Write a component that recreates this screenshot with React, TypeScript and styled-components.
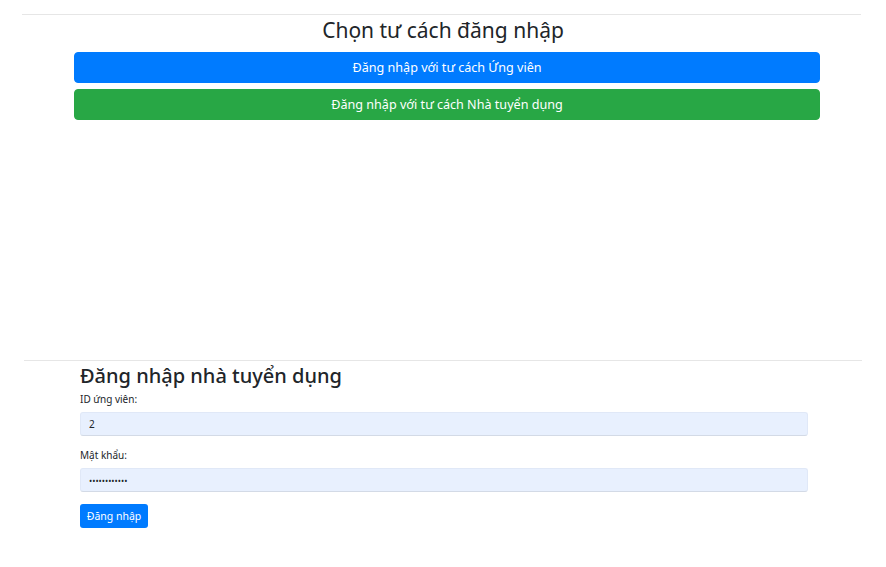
import React from 'react';
import styled, { createGlobalStyle } from 'styled-components';

const GlobalStyle = createGlobalStyle`
  body {
    margin: 0;
    background: #ffffff;
    font-family: "Noto Sans", "Liberation Sans", sans-serif;
    color: #212529;
  }
`;

const Page = styled.div`
  padding-top: 14px;
  display: flex;
  flex-direction: column;
`;

const Rule = styled.hr<{ $left: number; $right: number }>`
  margin: 0 ${(p) => p.$right}px 0 ${(p) => p.$left}px;
  border: 0;
  border-top: 1px solid #e6e6e6;
`;

const Title = styled.h2`
  margin: 1px 0 7px;
  text-align: center;
  font-size: 21px;
  font-weight: 400;
  line-height: 29px;
  color: #212529;
`;

const RoleList = styled.div`
  display: flex;
  flex-direction: column;
  gap: 6px;
  margin: 0 66px 0 74px;
`;

const RoleButton = styled.button<{ $bg: string }>`
  height: 31px;
  border: 1px solid ${(p) => p.$bg};
  border-radius: 4px;
  background: ${(p) => p.$bg};
  color: #ffffff;
  font-family: inherit;
  font-size: 12.6px;
  cursor: pointer;
`;

const Section = styled.section`
  margin-top: 240px;
  display: flex;
  flex-direction: column;
`;

const Form = styled.form`
  display: flex;
  flex-direction: column;
  width: 728px;
  margin-left: 80px;
`;

const Heading = styled.h3`
  margin: 2px 0 4px;
  font-size: 20px;
  font-weight: 500;
  line-height: 25px;
`;

const Label = styled.label`
  font-size: 10px;
  line-height: 14px;
  margin-bottom: 6px;
`;

const Input = styled.input<{ $small?: boolean }>`
  box-sizing: border-box;
  height: 24px;
  padding: 0 8px;
  border: 1px solid #e0e8f7;
  border-bottom-color: #d3dae6;
  border-radius: 3px;
  background: #e8f0fe;
  font-family: inherit;
  font-size: ${(p) => (p.$small ? '8.5px' : '10px')};
  color: #212529;
  margin-bottom: 12px;
  outline: none;
`;

const SubmitButton = styled.button`
  align-self: flex-start;
  width: 68px;
  height: 24px;
  border: 0;
  border-radius: 3px;
  background: #007bff;
  color: #ffffff;
  font-family: inherit;
  font-size: 10.5px;
  cursor: pointer;
`;

export default function App() {
  return (
    <Page>
      <GlobalStyle />
      <Rule $left={22} $right={25} />
      <Title>Chọn tư cách đăng nhập</Title>
      <RoleList>
        <RoleButton $bg="#007bff">Đăng nhập với tư cách Ứng viên</RoleButton>
        <RoleButton $bg="#28a745">Đăng nhập với tư cách Nhà tuyển dụng</RoleButton>
      </RoleList>
      <Section>
        <Rule $left={24} $right={24} />
        <Form onSubmit={(e) => e.preventDefault()}>
          <Heading>Đăng nhập nhà tuyển dụng</Heading>
          <Label htmlFor="uid">ID ứng viên:</Label>
          <Input id="uid" defaultValue="2" />
          <Label htmlFor="pwd">Mật khẩu:</Label>
          <Input id="pwd" type="password" $small defaultValue="123456789012" />
          <SubmitButton type="submit">Đăng nhập</SubmitButton>
        </Form>
      </Section>
    </Page>
  );
}
